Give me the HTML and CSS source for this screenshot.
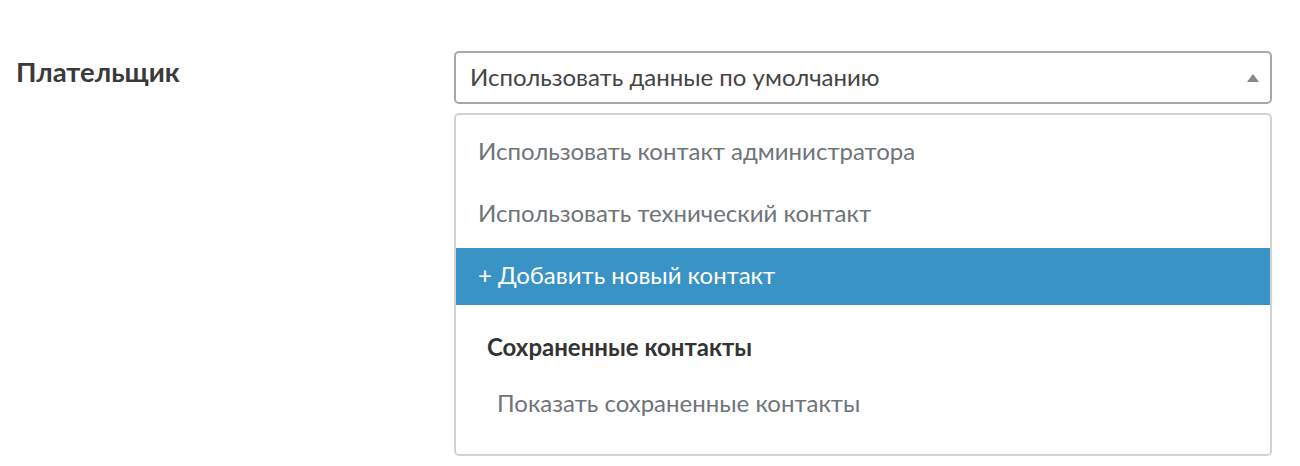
FILE: index.html
```html
<!DOCTYPE html>
<html lang="ru">
<head>
<meta charset="utf-8">
<title>Плательщик</title>
<link rel="stylesheet" href="styles.css">
</head>
<body>
<div class="row">
  <div class="label">Плательщик</div>
  <div class="field">
    <div class="select">
      <span class="select-value">Использовать данные по умолчанию</span>
      <span class="arrow"></span>
    </div>
    <div class="dropdown">
      <ul class="options">
        <li class="option">Использовать контакт администратора</li>
        <li class="option">Использовать технический контакт</li>
        <li class="option active">+ Добавить новый контакт</li>
      </ul>
      <div class="group">
        <div class="group-title">Сохраненные контакты</div>
        <div class="group-option">Показать сохраненные контакты</div>
      </div>
    </div>
  </div>
</div>
</body>
</html>
```
FILE: styles.css
```css
* { box-sizing: border-box; }
html, body {
  margin: 0;
  padding: 0;
  background: #fff;
  font-family: Lato, "Open Sans", sans-serif;
}
.row {
  display: flex;
  padding-top: 51px;
}
.label {
  width: 454px;
  padding-left: 16px;
  padding-top: 5px;
  font-size: 27.5px;
  font-weight: 700;
  color: #3a3a3a;
  line-height: 32px;
}
.field {
  width: 818px;
  display: flex;
  flex-direction: column;
  gap: 9px;
}
.select {
  height: 53px;
  border: 2px solid #a8a8a8;
  border-radius: 5px;
  display: flex;
  align-items: center;
  justify-content: space-between;
  padding: 0 11px 2px 14px;
}
.select-value {
  font-size: 24px;
  line-height: 30px;
  color: #444;
}
.arrow {
  width: 0;
  height: 0;
  border-left: 6px solid transparent;
  border-right: 6px solid transparent;
  border-bottom: 8px solid #888;
  margin-top: 2px;
}
.dropdown {
  height: 343px;
  border: 2px solid #d2d2d2;
  border-radius: 5px;
  padding-top: 9px;
}
.options {
  list-style: none;
  margin: 0;
  padding: 0;
  display: flex;
  flex-direction: column;
  gap: 5px;
}
.option {
  height: 57px;
  display: flex;
  align-items: center;
  padding-left: 22px;
  padding-bottom: 5px;
  font-size: 24px;
  color: #6e7479;
}
.option.active {
  background: #3a93c5;
  color: #fff;
}
.group {
  padding-top: 27px;
}
.group-title {
  padding-left: 31px;
  font-size: 24px;
  font-weight: 700;
  color: #333;
  line-height: 30px;
}
.group-option {
  padding-left: 41px;
  padding-top: 26px;
  font-size: 24px;
  color: #6e7479;
  line-height: 30px;
}
```
